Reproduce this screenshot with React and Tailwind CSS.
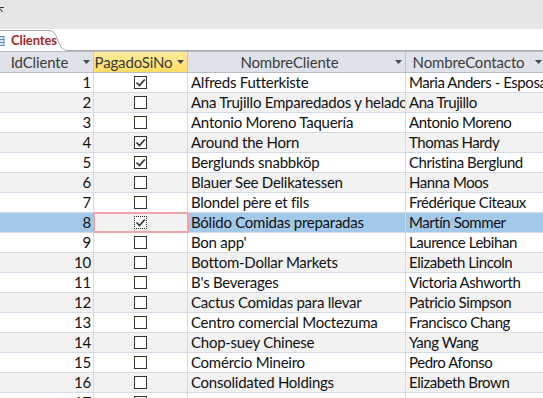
import React from "react";

const rows = [
  [1, true, "Alfreds Futterkiste", "Maria Anders - Esposa"],
  [2, false, "Ana Trujillo Emparedados y helado", "Ana Trujillo"],
  [3, false, "Antonio Moreno Taquería", "Antonio Moreno"],
  [4, true, "Around the Horn", "Thomas Hardy"],
  [5, true, "Berglunds snabbköp", "Christina Berglund"],
  [6, false, "Blauer See Delikatessen", "Hanna Moos"],
  [7, false, "Blondel père et fils", "Frédérique Citeaux"],
  [8, true, "Bólido Comidas preparadas", "Martín Sommer"],
  [9, false, "Bon app'", "Laurence Lebihan"],
  [10, false, "Bottom-Dollar Markets", "Elizabeth Lincoln"],
  [11, false, "B's Beverages", "Victoria Ashworth"],
  [12, false, "Cactus Comidas para llevar", "Patricio Simpson"],
  [13, false, "Centro comercial Moctezuma", "Francisco Chang"],
  [14, false, "Chop-suey Chinese", "Yang Wang"],
  [15, false, "Comércio Mineiro", "Pedro Afonso"],
  [16, false, "Consolidated Holdings", "Elizabeth Brown"],
  [17, false, "", ""],
];

function Arrow() {
  return (
    <div className="w-[14px] flex items-center justify-center shrink-0">
      <svg width="7" height="4" viewBox="0 0 7 4">
        <path d="M0 0 H7 L3.5 4 Z" fill="#4a4a4a" />
      </svg>
    </div>
  );
}

function Check({ checked, focused }) {
  return (
    <div
      className={
        "w-[13px] h-[13px] bg-white flex items-center justify-center " +
        (focused ? "border border-dotted border-[#222]" : "border border-[#333]")
      }
    >
      {checked && (
        <svg width="11" height="11" viewBox="0 0 11 11">
          <path d="M1.5 5.5 L4.5 8.5 L9.8 2.5" fill="none" stroke="#333" strokeWidth="1.7" />
        </svg>
      )}
    </div>
  );
}

function HeaderCell({ w, label, active }) {
  return (
    <div
      className={
        "flex items-center h-full border-r border-[#c4c8ce] " +
        w +
        (active ? " bg-gradient-to-b from-[#ffec9c] to-[#ffdc62]" : "")
      }
    >
      <div className="flex-1 min-w-0 flex justify-center whitespace-nowrap">
        <span className="shrink-0">{label}</span>
      </div>
      <Arrow />
    </div>
  );
}

export default function App() {
  return (
    <div
      className="w-[543px] h-[398px] overflow-hidden bg-white text-[15px] leading-none tracking-[-0.15px]"
      style={{ fontFamily: "Lato, 'Open Sans', sans-serif" }}
    >
      {/* top gray bar */}
      <div className="h-[29px] bg-[#e6e6e6] relative">
        <svg className="absolute left-0 top-[7px]" width="5" height="6" viewBox="0 0 5 6">
          <path d="M0 0.5 H4 M0 1.5 L2.5 5" stroke="#333" strokeWidth="1" fill="none" />
        </svg>
      </div>
      {/* tab strip */}
      <div className="h-[22px] relative bg-white">
        <svg className="absolute left-0 top-0" width="543" height="22" viewBox="0 0 543 22">
          <path
            d="M0 1.5 H49 Q53 1.5 55 5 L61 18 Q63 21.5 67 21.5 H543"
            fill="none"
            stroke="#a8a8a8"
            strokeWidth="1"
          />
        </svg>
        <div className="relative flex items-center h-full pt-[1px]">
          <svg width="5" height="10" viewBox="0 0 5 10" className="mr-[6px]">
            <rect x="-1" y="0.5" width="5" height="9" fill="#dbe6f4" stroke="#5b87c0" />
            <path d="M0 3.5 H4 M0 6.5 H4" stroke="#5b87c0" />
          </svg>
          <span className="text-[13px] text-[#a4262c] font-bold tracking-[-0.1px]">Clientes</span>
        </div>
      </div>
      {/* header */}
      <div className="h-[22px] flex bg-[#dfe3e9] border-y border-[#b9bdc3] text-[#3c3c3c]">
        <HeaderCell w="w-[94px] shrink-0" label="IdCliente" />
        <HeaderCell w="w-[94px] shrink-0" label="PagadoSiNo" active />
        <HeaderCell w="w-[218px] shrink-0" label="NombreCliente" />
        <HeaderCell w="w-[140px] shrink-0" label="NombreContacto" />
      </div>
      {/* rows */}
      {rows.map(([id, paid, name, contact]) => {
        const sel = id === 8;
        const bg = sel ? "bg-[#a3c9ea]" : id % 2 === 0 ? "bg-[#f2f2f2]" : "bg-white";
        return (
          <div key={id} className={"h-[20px] flex border-b border-[#d3dbe6] text-[#111] " + bg}>
            <div className="w-[94px] shrink-0 border-r border-[#d3dbe6] flex items-center justify-end pr-[2px]">
              {id}
            </div>
            <div
              className={
                "w-[94px] shrink-0 border-r border-[#d3dbe6] flex items-center justify-center " +
                (sel ? "bg-[#f2f2f2] outline-2 outline-[#f2a3ab] -outline-offset-1" : "")
              }
            >
              <Check checked={paid} focused={sel} />
            </div>
            <div className="w-[218px] shrink-0 border-r border-[#d3dbe6] flex items-center pl-[3px] overflow-hidden whitespace-nowrap tracking-[-0.25px]">
              {name}
            </div>
            <div className="flex-1 flex items-center pl-[3px] overflow-hidden whitespace-nowrap tracking-[-0.45px]">
              {contact}
            </div>
          </div>
        );
      })}
    </div>
  );
}
